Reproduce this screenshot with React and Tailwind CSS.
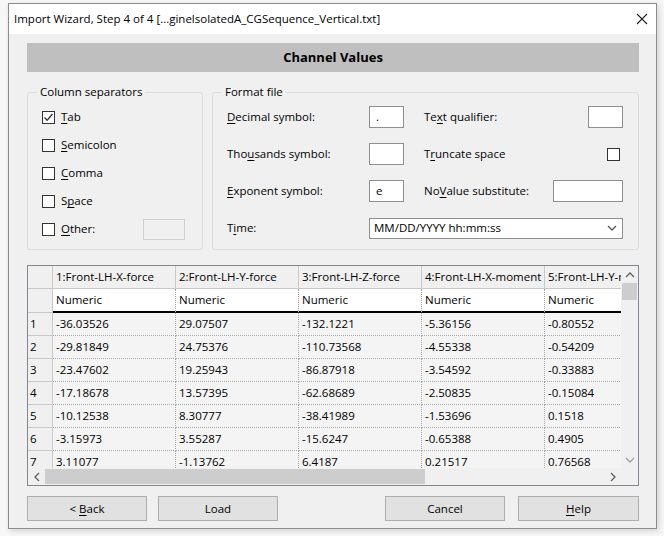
import React from 'react';

const font = { fontFamily: '"Open Sans", "Noto Sans", Arial, sans-serif' };

const Chevron = ({ dir = 'down', className = '' }) => {
  const pts = {
    down: '1,3 5,7 9,3',
    up: '1,7 5,3 9,7',
    left: '7,1 3,5 7,9',
    right: '3,1 7,5 3,9',
  }[dir];
  return (
    <svg width="10" height="10" viewBox="0 0 10 10" className={className}>
      <polyline points={pts} fill="none" stroke="currentColor" strokeWidth="1.3" />
    </svg>
  );
};

const U = ({ children }) => <span className="underline underline-offset-2">{children}</span>;

const Check = ({ checked }) => (
  <div className="w-[13px] h-[13px] border border-[#333] bg-white flex items-center justify-center shrink-0">
    {checked && (
      <svg width="11" height="11" viewBox="0 0 11 11">
        <polyline points="1.5,5.5 4.2,8.2 9.5,2" fill="none" stroke="#333" strokeWidth="1.3" />
      </svg>
    )}
  </div>
);

const columns = ['1:Front-LH-X-force', '2:Front-LH-Y-force', '3:Front-LH-Z-force', '4:Front-LH-X-moment', '5:Front-LH-Y-moment'];

const rows = [
  ['-36.03526', '29.07507', '-132.1221', '-5.36156', '-0.80552'],
  ['-29.81849', '24.75376', '-110.73568', '-4.55338', '-0.54209'],
  ['-23.47602', '19.25943', '-86.87918', '-3.54592', '-0.33883'],
  ['-17.18678', '13.57395', '-62.68689', '-2.50835', '-0.15084'],
  ['-10.12538', '8.30777', '-38.41989', '-1.53696', '0.1518'],
  ['-3.15973', '3.55287', '-15.6247', '-0.65388', '0.4905'],
  ['3.11077', '-1.13762', '6.4187', '0.21517', '0.76568'],
];

const separators = [
  { label: <><U>T</U>ab</>, checked: true },
  { label: <><U>S</U>emicolon</> },
  { label: <><U>C</U>omma</> },
  { label: <>S<U>p</U>ace</> },
  { label: <><U>O</U>ther:</>, other: true },
];

export default function App() {
  return (
    <div className="w-[664px] h-[536px] bg-[#f7f7f7] pt-[3px] pl-[8px] text-[11.5px] text-black" style={font}>
      <div className="w-[649px] h-[526px] border border-[#8c8c8c] bg-[#f0f0f0] shadow-[2px_2px_6px_rgba(0,0,0,0.15)] flex flex-col">
        {/* Title bar */}
        <div className="h-[30px] bg-white flex items-center justify-between pl-[5px] pr-[8px] shrink-0">
          <span className="text-[11.5px]">Import Wizard, Step 4 of 4 [...ginelsolatedA_CGSequence_Vertical.txt]</span>
          <svg width="12" height="12" viewBox="0 0 12 12">
            <path d="M1 1 L11 11 M11 1 L1 11" stroke="#222" strokeWidth="1.1" />
          </svg>
        </div>

        <div className="flex-1 flex flex-col pl-[18px] pr-[17px] pt-[9px]">
          {/* Header */}
          <div className="h-[29px] bg-[#bfbfbf] flex items-center justify-center font-bold text-[13px]">
            Channel Values
          </div>

          {/* Groups */}
          <div className="mt-[12px] flex gap-[9px] h-[166px]">
            <fieldset className="w-[176px] border border-[#dcdcdc] rounded-[3px] pl-[14px] pr-[17px] pt-[3px]">
              <legend className="-ml-[5px] px-[3px] leading-[16px]">Column separators</legend>
              <div className="flex flex-col">
                {separators.map((s, i) => (
                  <div key={i} className="h-[28px] flex items-center">
                    <Check checked={s.checked} />
                    <span className="ml-[6px]">{s.label}</span>
                    {s.other && <div className="ml-auto w-[42px] h-[21px] border border-[#d0d0d0] bg-[#f0f0f0]" />}
                  </div>
                ))}
              </div>
            </fieldset>

            <fieldset className="flex-1 border border-[#dcdcdc] rounded-[3px] pl-[14px] pr-[15px] pt-[6px]">
              <legend className="-ml-[5px] px-[3px] leading-[16px]">Format file</legend>
              <div className="flex flex-col gap-[15px]">
                <div className="h-[22px] flex items-center">
                  <span className="w-[142px]"><U>D</U>ecimal symbol:</span>
                  <div className="w-[35px] h-[22px] border border-[#8f8f8f] bg-white pl-[6px] leading-[20px]">.</div>
                  <span className="ml-[20px] flex-1">Te<U>x</U>t qualifier:</span>
                  <div className="w-[35px] h-[22px] border border-[#8f8f8f] bg-white" />
                </div>
                <div className="h-[22px] flex items-center">
                  <span className="w-[142px]">Tho<U>u</U>sands symbol:</span>
                  <div className="w-[35px] h-[22px] border border-[#8f8f8f] bg-white" />
                  <span className="ml-[20px] flex-1">T<U>r</U>uncate space</span>
                  <div className="mr-[3px]"><Check /></div>
                </div>
                <div className="h-[22px] flex items-center">
                  <span className="w-[142px]"><U>E</U>xponent symbol:</span>
                  <div className="w-[35px] h-[22px] border border-[#8f8f8f] bg-white pl-[6px] leading-[20px]">e</div>
                  <span className="ml-[20px] flex-1">No<U>V</U>alue substitute:</span>
                  <div className="w-[70px] h-[22px] border border-[#8f8f8f] bg-white" />
                </div>
                <div className="h-[22px] flex items-center">
                  <span className="w-[142px]">T<U>i</U>me:</span>
                  <div className="flex-1 h-[21px] border border-[#8f8f8f] bg-white flex items-center justify-between pl-[4px] pr-[5px]">
                    <span>MM/DD/YYYY hh:mm:ss</span>
                    <Chevron dir="down" className="text-[#555]" />
                  </div>
                </div>
              </div>
            </fieldset>
          </div>

          {/* Table */}
          <div className="mt-[15px] h-[221px] border border-[#828790] bg-white flex flex-col text-[11.5px]">
            <div className="flex-1 flex overflow-hidden">
              <div className="flex-1 overflow-hidden">
                <div className="flex h-[23px] bg-[#f0f0f0] border-b border-[#c8c8c8]">
                  <div className="w-[25px] shrink-0 border-r border-[#c8c8c8]" />
                  {columns.map((c, i) => (
                    <div key={i} className="w-[123px] shrink-0 border-r border-[#c8c8c8] pl-[3px] flex items-center whitespace-nowrap overflow-hidden">{c}</div>
                  ))}
                </div>
                <div className="flex h-[24px]">
                  <div className="w-[25px] shrink-0 bg-[#f0f0f0] border-r border-b border-[#c8c8c8]" />
                  {columns.map((c, i) => (
                    <div key={i} className="w-[123px] shrink-0 bg-white border-r border-dotted border-[#a0a0a0] border-b-2 border-b-black pl-[3px] flex items-center" style={{ borderBottomStyle: 'solid' }}>Numeric</div>
                  ))}
                </div>
                {rows.map((r, ri) => (
                  <div key={ri} className="flex h-[23px]">
                    <div className="w-[25px] shrink-0 bg-[#f0f0f0] border-r border-b border-[#c8c8c8] pl-[2px] flex items-center">{ri + 1}</div>
                    {r.map((v, ci) => (
                      <div key={ci} className="w-[123px] shrink-0 bg-[#f4f4f4] border-r border-b border-dotted border-[#a8a8a8] pl-[3px] flex items-center">{v}</div>
                    ))}
                  </div>
                ))}
              </div>
              {/* vertical scrollbar */}
              <div className="w-[17px] shrink-0 bg-[#f0f0f0] flex flex-col items-center">
                <div className="h-[17px] flex items-center justify-center text-[#606060]"><Chevron dir="up" /></div>
                <div className="w-[15px] h-[17px] bg-[#cdcdcd]" />
                <div className="flex-1" />
                <div className="h-[17px] flex items-center justify-center text-[#a0a0a0]"><Chevron dir="down" /></div>
              </div>
            </div>
            {/* horizontal scrollbar */}
            <div className="h-[17px] shrink-0 flex bg-[#f0f0f0]">
              <div className="w-[17px] flex items-center justify-center text-[#606060]"><Chevron dir="left" /></div>
              <div className="w-[380px] h-[15px] mt-[1px] bg-[#cdcdcd]" />
              <div className="flex-1" />
              <div className="w-[17px] flex items-center justify-center text-[#606060]"><Chevron dir="right" /></div>
              <div className="w-[17px] bg-[#f0f0f0]" />
            </div>
          </div>

          {/* Buttons */}
          <div className="mt-[10px] flex items-center">
            <button className="w-[120px] h-[25px] bg-[#e1e1e1] border border-[#adadad]">&lt; <U>B</U>ack</button>
            <button className="ml-[11px] w-[120px] h-[25px] bg-[#e1e1e1] border border-[#adadad]">Load</button>
            <button className="ml-auto w-[120px] h-[25px] bg-[#e1e1e1] border border-[#adadad]">Cancel</button>
            <button className="ml-[13px] w-[121px] h-[25px] bg-[#e1e1e1] border border-[#adadad]"><U>H</U>elp</button>
          </div>
        </div>
      </div>
    </div>
  );
}
